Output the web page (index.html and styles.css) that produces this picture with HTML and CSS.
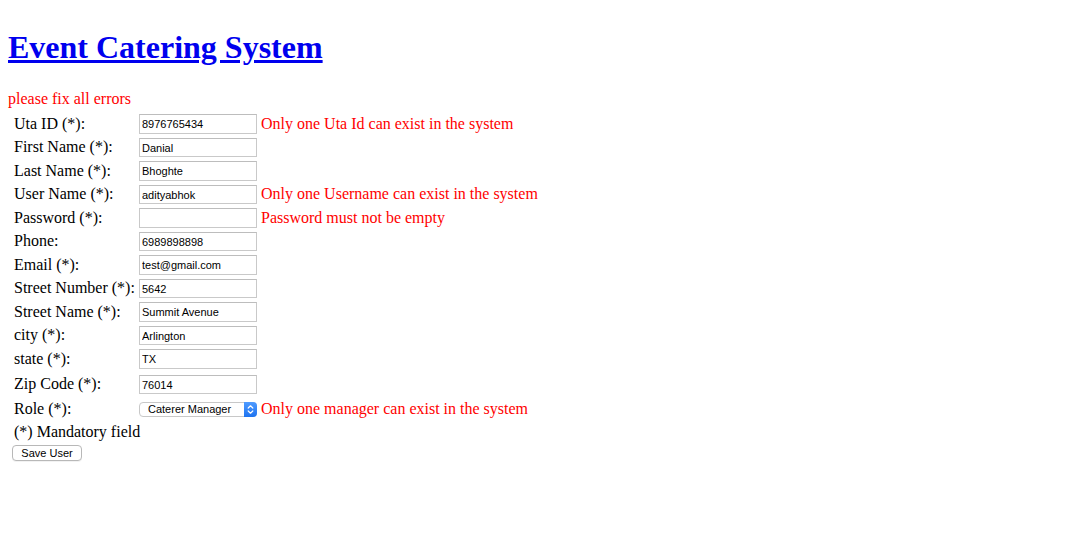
FILE: index.html
```html
<!DOCTYPE html>
<html>
<head>
<meta charset="utf-8">
<title>Event Catering System</title>
<link rel="stylesheet" href="styles.css">
</head>
<body>
<div class="page">
  <h1 class="title"><a href="#">Event Catering System</a></h1>
  <div class="form-error">please fix all errors</div>
  <form>
    <table class="form-table">
      <tr>
        <td class="label">Uta ID (*):</td>
        <td class="field"><input class="text-input" type="text" value="8976765434"></td>
        <td class="err">Only one Uta Id can exist in the system</td>
      </tr>
      <tr>
        <td class="label">First Name (*):</td>
        <td class="field"><input class="text-input" type="text" value="Danial"></td>
        <td class="err"></td>
      </tr>
      <tr>
        <td class="label">Last Name (*):</td>
        <td class="field"><input class="text-input" type="text" value="Bhoghte"></td>
        <td class="err"></td>
      </tr>
      <tr>
        <td class="label">User Name (*):</td>
        <td class="field"><input class="text-input" type="text" value="adityabhok"></td>
        <td class="err">Only one Username can exist in the system</td>
      </tr>
      <tr>
        <td class="label">Password (*):</td>
        <td class="field"><input class="text-input" type="password" value=""></td>
        <td class="err">Password must not be empty</td>
      </tr>
      <tr>
        <td class="label">Phone:</td>
        <td class="field"><input class="text-input" type="text" value="6989898898"></td>
        <td class="err"></td>
      </tr>
      <tr>
        <td class="label">Email (*):</td>
        <td class="field"><input class="text-input" type="text" value="test@gmail.com"></td>
        <td class="err"></td>
      </tr>
      <tr>
        <td class="label">Street Number (*):</td>
        <td class="field"><input class="text-input" type="text" value="5642"></td>
        <td class="err"></td>
      </tr>
      <tr>
        <td class="label">Street Name (*):</td>
        <td class="field"><input class="text-input" type="text" value="Summit Avenue"></td>
        <td class="err"></td>
      </tr>
      <tr>
        <td class="label">city (*):</td>
        <td class="field"><input class="text-input" type="text" value="Arlington"></td>
        <td class="err"></td>
      </tr>
      <tr>
        <td class="label">state (*):</td>
        <td class="field"><input class="text-input" type="text" value="TX"></td>
        <td class="err"></td>
      </tr>
      <tr class="row-zip">
        <td class="label">Zip Code (*):</td>
        <td class="field"><input class="text-input" type="text" value="76014"></td>
        <td class="err"></td>
      </tr>
      <tr class="row-role">
        <td class="label">Role (*):</td>
        <td class="field">
          <span class="select-wrap">
            <select class="select-input">
              <option>Caterer Manager</option>
            </select>
            <span class="select-arrows">
              <svg width="13" height="15" viewBox="0 0 13 15">
                <path d="M4.2 6 L6.5 3.8 L8.8 6" fill="none" stroke="#fff" stroke-width="1.2" stroke-linecap="round" stroke-linejoin="round"/>
                <path d="M4.2 9 L6.5 11.2 L8.8 9" fill="none" stroke="#fff" stroke-width="1.2" stroke-linecap="round" stroke-linejoin="round"/>
              </svg>
            </span>
          </span>
        </td>
        <td class="err">Only one manager can exist in the system</td>
      </tr>
      <tr>
        <td class="label" colspan="3">(*) Mandatory field</td>
      </tr>
      <tr>
        <td class="btn-cell" colspan="3"><button class="btn" type="button">Save User</button></td>
      </tr>
    </table>
  </form>
</div>
</body>
</html>
```

FILE: styles.css
```css
html, body {
  margin: 0;
  padding: 0;
  background: #ffffff;
}

body {
  font-family: "Liberation Serif", "Times New Roman", serif;
  font-size: 16px;
  color: #000000;
}

.page {
  padding: 0 8px;
}

.title {
  margin: 29px 0 0;
  font-size: 32px;
  line-height: 37px;
  font-weight: bold;
}

.title a {
  color: #0000ee;
  text-decoration: underline;
}

.form-error {
  margin-top: 24px;
  color: #ff0000;
  line-height: 18.4px;
}

form {
  margin: 0;
}

.form-table {
  margin-top: 3px;
  border-collapse: separate;
  border-spacing: 2px;
}

.form-table td {
  padding: 1px;
  vertical-align: middle;
  white-space: nowrap;
  line-height: 18.4px;
}

.form-table td.label {
  padding-left: 4px;
  width: 121px;
}

.form-table td.field {
  width: 118px;
}

.form-table td.err {
  color: #ff0000;
}

.text-input {
  display: block;
  box-sizing: border-box;
  width: 118px;
  height: 19.5px;
  margin: 0;
  padding: 0 2px;
  border: 1px solid #c9c9c9;
  border-top-color: #bdbdbd;
  background: #ffffff;
  font-family: "Liberation Sans", Arial, sans-serif;
  font-size: 11px;
  color: #000000;
  outline: none;
}

.row-zip td {
  padding-top: 3px;
}

.row-role td {
  padding-top: 3px;
  padding-bottom: 1px;
}

.select-wrap {
  position: relative;
  display: block;
  width: 118px;
  height: 15px;
}

.select-input {
  -webkit-appearance: none;
  appearance: none;
  display: block;
  box-sizing: border-box;
  width: 118px;
  height: 15px;
  margin: 0;
  padding: 0 0 0 8px;
  border: 1px solid #c8c8c8;
  border-radius: 4px;
  background: #ffffff;
  font-family: "Liberation Sans", Arial, sans-serif;
  font-size: 11px;
  line-height: 13px;
  color: #000000;
  outline: none;
}

.select-arrows {
  position: absolute;
  right: 0;
  top: 0;
  width: 13px;
  height: 15px;
  border-radius: 0 4px 4px 0;
  background: linear-gradient(#4f9bff, #1d73f0);
}

.select-arrows svg {
  display: block;
}

.form-table td.btn-cell {
  padding-left: 2px;
  padding-top: 1px;
}

.btn {
  display: block;
  box-sizing: border-box;
  width: 70px;
  height: 16px;
  margin: 0;
  padding: 0;
  border: 1px solid #b8b8b8;
  border-radius: 4px;
  background: #ffffff;
  font-family: "Liberation Sans", Arial, sans-serif;
  font-size: 11px;
  line-height: 14px;
  color: #000000;
  box-shadow: 0 1px 0 rgba(0,0,0,0.05);
}
```
